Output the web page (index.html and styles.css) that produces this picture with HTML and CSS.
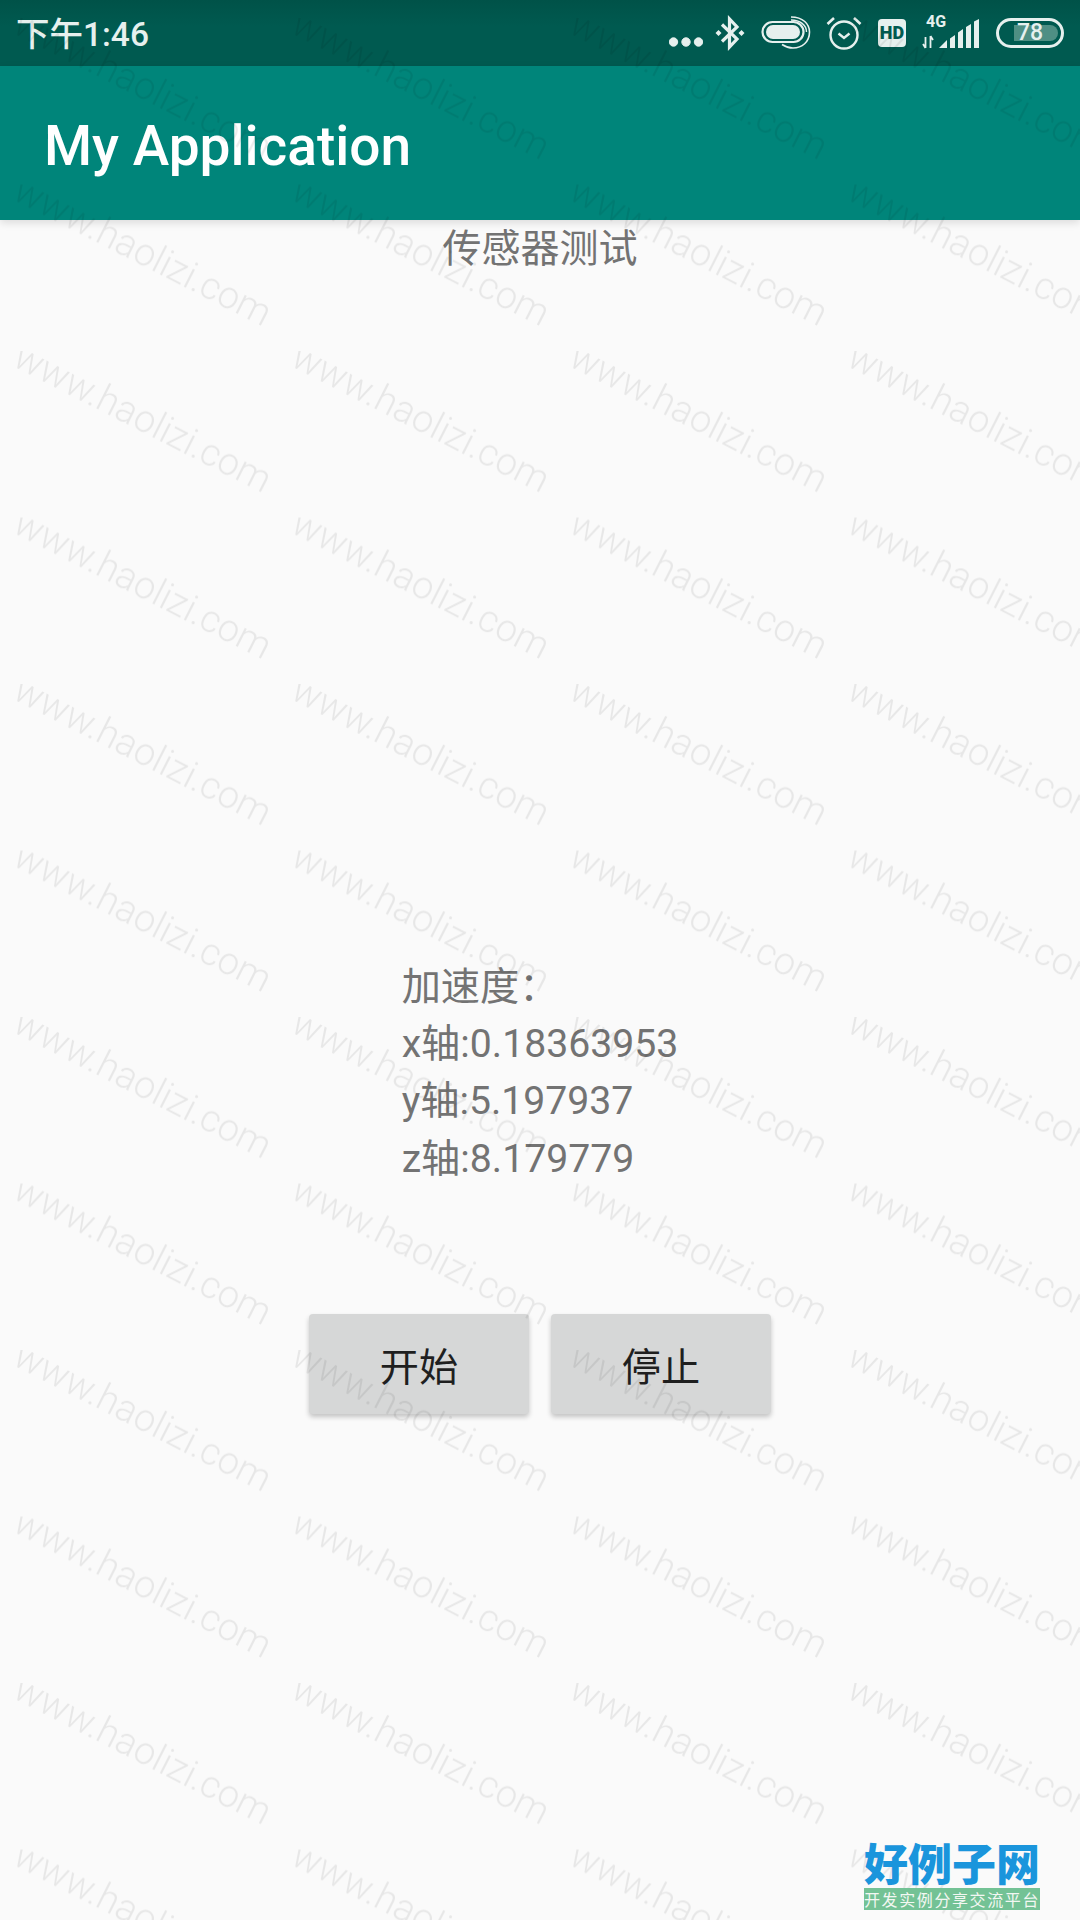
FILE: index.html
```html
<!DOCTYPE html>
<html lang="zh-CN">
<head>
    <meta charset="UTF-8">
    <meta name="viewport" content="width=device-width, initial-scale=1.0">
    <title>My Application</title>
    <link rel="stylesheet" href="styles.css">
</head>
<body>
    <div class="status-bar">
        <span class="status-time">下午1:46</span>
        <div class="status-icons">
            <svg class="icon-dots" width="34" height="10" viewBox="0 0 34 10">
                <circle cx="4.5" cy="5" r="4.2"/><circle cx="17" cy="5" r="4.2"/><circle cx="29.5" cy="5" r="4.2"/>
            </svg>
            <svg class="icon-bt" width="30" height="36" viewBox="0 0 30 36">
                <path d="M7 9.5 L22 24 L14.5 32 V4 L22 12 L7 26.5" fill="none" stroke-width="3.2"/>
                <path d="M0.5 18 L3.5 15 L6.5 18 L3.5 21 Z M23.5 18 L26.5 15 L29.5 18 L26.5 21 Z" class="solid"/>
            </svg>
            <svg class="icon-loop" width="50" height="36" viewBox="0 0 50 36">
                <rect x="1.5" y="7" width="41" height="20" rx="10" fill="none" stroke-width="2.2"/>
                <rect x="5" y="10" width="34" height="14" rx="7" class="solid"/>
                <path d="M30 2 C42 2 48.5 9 48.5 17 C48.5 27 41 33 32 33 C27 33 24 31.5 21 29.5" fill="none" stroke-width="1.6"/>
                <path d="M30 5 C39 5 45.5 10 45.5 17" fill="none" stroke-width="1.4"/>
            </svg>
            <svg class="icon-alarm" width="36" height="36" viewBox="0 0 36 36">
                <circle cx="18" cy="20" r="13.5" fill="none" stroke-width="2.4"/>
                <path d="M12.5 18.5 L18 23 L23.5 18.5" fill="none" stroke-width="2.4"/>
                <path d="M1.5 9 L8 3 M34.5 9 L28 3" fill="none" stroke-width="2.6"/>
            </svg>
            <svg class="icon-hd" width="28" height="28" viewBox="0 0 28 28">
                <rect width="28" height="28" rx="4" class="solid"/>
                <text x="14" y="20" class="hd-text">HD</text>
            </svg>
            <div class="net">
                <span class="net-label">4G</span>
                <svg width="58" height="32" viewBox="0 0 58 32">
                    <path d="M3.5 20 V31 M1 27 L3.5 31 M8.5 31 V19 M8.5 19 L11 23" fill="none" stroke-width="1.8"/>
                    <path class="solid" d="M17 31 L25 23 V31 Z M28 31 V21.5 L33 18 V31 Z M36 31 V15.5 L41 12 V31 Z M44 31 V10 L49 7 V31 Z M52 31 V4.5 L57 2 V31 Z"/>
                </svg>
            </div>
            <div class="battery">
                <div class="battery-fill"></div>
                <span class="battery-num">78</span>
            </div>
        </div>
    </div>

    <div class="app-bar">My Application</div>

    <div class="content">
        <div class="sensor-title">传感器测试</div>
        <div class="readings">
            <div>加速度：</div>
            <div>x轴:0.18363953</div>
            <div>y轴:5.197937</div>
            <div>z轴:8.179779</div>
        </div>
        <div class="buttons">
            <button class="btn">开始</button>
            <button class="btn">停止</button>
        </div>
    </div>

    <!-- 水印 -->
    <svg class="watermark" width="1080" height="1920">
        <defs>
            <pattern id="wm" x="10" y="18" width="278" height="166.5" patternUnits="userSpaceOnUse">
                <text class="wm-text" transform="translate(1 14) rotate(27)">www.haolizi.com</text>
            </pattern>
        </defs>
        <rect width="1080" height="1920" fill="url(#wm)"/>
    </svg>

    <div class="site-logo">
        <div class="site-name">好例子网</div>
        <div class="site-slogan">开发实例分享交流平台</div>
    </div>
</body>
</html>
```

FILE: styles.css
```css
* {
    margin: 0;
    padding: 0;
    box-sizing: border-box;
}

html, body {
    width: 1080px;
    height: 1920px;
    overflow: hidden;
}

body {
    position: relative;
    background-color: #fafafa;
    font-family: 'Roboto', 'Noto Sans CJK SC', sans-serif;
}

.status-bar {
    height: 66px;
    background: linear-gradient(#005248, #005a50 40%);
    display: flex;
    align-items: center;
    justify-content: space-between;
    padding: 0 16px 0 16px;
    color: #e6f0ee;
}

.status-time {
    font-size: 33.5px;
    font-weight: 500;
    line-height: 62px;
    margin-top: 4px;
}

.status-icons {
    display: flex;
    align-items: center;
}

.status-icons svg {
    stroke: #e6f0ee;
    fill: #e6f0ee;
    display: block;
}

.status-icons svg .solid {
    stroke: none;
}

.icon-dots { margin-top: 17px; }
.icon-bt { margin-left: 12px; }
.icon-loop { margin-left: 16px; }
.icon-alarm { margin-left: 15px; }
.icon-hd { margin-left: 16px; }

.hd-text {
    font-family: 'Roboto', sans-serif;
    font-size: 18px;
    font-weight: 900;
    text-anchor: middle;
    fill: #005a50;
    stroke: #005a50;
    stroke-width: 0;
}

.net {
    margin-left: 16px;
    position: relative;
    width: 58px;
    height: 32px;
}

.net-label {
    position: absolute;
    left: 4px;
    top: -4px;
    font-size: 16px;
    font-weight: 700;
    line-height: 18px;
}

.battery {
    margin-left: 16px;
    width: 68px;
    height: 30px;
    border: 3px solid #e6f0ee;
    border-radius: 15px;
    display: flex;
    align-items: center;
    justify-content: center;
    position: relative;
    overflow: hidden;
}

.battery-fill {
    position: absolute;
    left: 15px;
    top: 4px;
    bottom: 4px;
    width: 44px;
    background-color: #4f8f84;
    border-radius: 0 8px 8px 0;
}

.battery-num {
    position: relative;
    font-size: 23px;
    font-weight: 500;
    line-height: 24px;
}

.app-bar {
    height: 154px;
    background-color: #00857a;
    color: #fff;
    font-size: 55px;
    font-weight: 500;
    line-height: 160px;
    padding-left: 44px;
    box-shadow: 0 3px 8px rgba(0,0,0,0.12);
    position: relative;
}

.content {
    display: flex;
    flex-direction: column;
    align-items: center;
    color: #737373;
    font-size: 39.2px;
}

.sensor-title {
    font-size: 39px;
    line-height: 52px;
    margin-top: 3px;
    text-align: center;
}

.readings {
    margin-top: 684px;
    line-height: 57.2px;
}

.buttons {
    display: flex;
    gap: 22px;
    margin-top: 126px;
}

.btn {
    width: 220px;
    height: 100px;
    border: none;
    border-radius: 4px;
    background-color: #d6d7d7;
    color: #1f1f1f;
    font-family: inherit;
    font-size: 39.2px;
    box-shadow: 0 3px 5px rgba(0,0,0,0.22);
}

.watermark {
    position: absolute;
    left: 0;
    top: 0;
    pointer-events: none;
}

.wm-text {
    font-family: 'Roboto', sans-serif;
    font-size: 38px;
    font-weight: 300;
    fill: rgba(0,0,0,0.075);
}

.site-logo {
    position: absolute;
    left: 864px;
    top: 1838px;
    width: 176px;
}

.site-name {
    font-family: 'Noto Sans CJK SC', sans-serif;
    font-size: 44px;
    font-weight: 900;
    line-height: 48px;
    color: #1a95dc;
    text-align: center;
}

.site-slogan {
    margin-top: 2px;
    height: 22px;
    background-color: #73c295;
    color: #f2f7f2;
    font-family: 'Noto Sans CJK SC', sans-serif;
    font-size: 16px;
    line-height: 22px;
    letter-spacing: 1.6px;
    white-space: nowrap;
    text-align: center;
}
```
